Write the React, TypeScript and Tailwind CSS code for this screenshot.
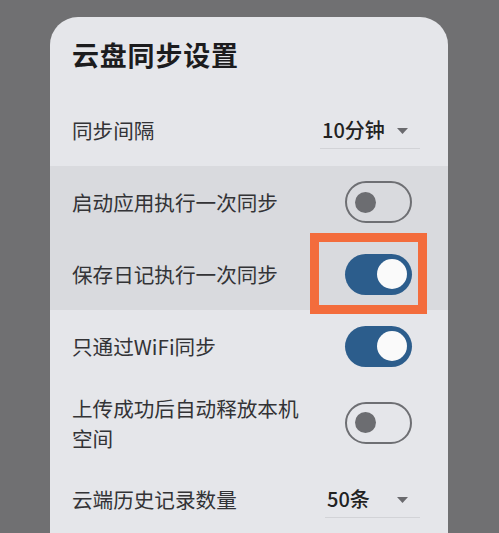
import React from "react";

const font = { fontFamily: '"Noto Sans CJK SC", "Noto Sans", sans-serif' };

function Toggle({ on }: { on: boolean }) {
  if (on) {
    return (
      <div className="w-[67px] h-[41px] rounded-full bg-[#2c5d8c] flex items-center justify-end pr-[5px] shrink-0">
        <div className="w-[30px] h-[30px] rounded-full bg-[#fafafa]" />
      </div>
    );
  }
  return (
    <div className="w-[67px] h-[42px] rounded-full border-[2.5px] border-[#6e6f73] flex items-center pl-[8px] shrink-0">
      <div className="w-[21px] h-[21px] rounded-full bg-[#6c6d71]" />
    </div>
  );
}

function Dropdown({ value, w }: { value: string; w: string }) {
  return (
    <div className={`${w} h-[38px] pt-[5px] border-b border-[#d2d3d7] flex items-start justify-between pl-[2px] pr-[12px] mr-[28px]`}>
      <span className="text-[20px] leading-[28px] font-medium text-[#222222]">{value}</span>
      <svg width="11" height="6" viewBox="0 0 11 6" className="mt-[12px]">
        <path d="M0 0 L11 0 L5.5 6 Z" fill="#6a6a6e" />
      </svg>
    </div>
  );
}

function Row({ label, children, h = "h-[72px]" }: { label: React.ReactNode; children: React.ReactNode; h?: string }) {
  return (
    <div className={`${h} flex items-center justify-between pl-[22px]`}>
      <div className="max-w-[240px] text-[20.6px] leading-[30px] text-[#333336]">{label}</div>
      {children}
    </div>
  );
}

export default function App() {
  return (
    <div className="w-[499px] h-[533px] overflow-hidden bg-[#707072] pt-[17px] pl-[50px] pr-[51px]" style={font}>
      <div className="bg-[#e5e6ea] rounded-t-[28px] pb-[60px]">
        <div className="pt-[20px] pl-[22px] pb-[21px] text-[27px] leading-[36px] font-bold text-[#1c1c1e] tracking-[0.8px]">
          云盘同步设置
        </div>
        <Row label="同步间隔">
          <Dropdown value="10分钟" w="w-[100px]" />
        </Row>
        <div className="relative bg-[#d9dade]">
          <Row label="启动应用执行一次同步">
            <div className="mr-[36px]"><Toggle on={false} /></div>
          </Row>
          <Row label="保存日记执行一次同步">
            <div className="mr-[36px]"><Toggle on={true} /></div>
          </Row>
          <div className="absolute left-[260px] top-[67px] w-[117px] h-[81px] border-[9px] border-[#f36c3c]" />
        </div>
        <Row label="只通过WiFi同步">
          <div className="mr-[36px]"><Toggle on={true} /></div>
        </Row>
        <Row label="上传成功后自动释放本机空间" h="h-[81px]">
          <div className="mr-[36px]"><Toggle on={false} /></div>
        </Row>
        <Row label="云端历史记录数量">
          <Dropdown value="50条" w="w-[95px]" />
        </Row>
      </div>
    </div>
  );
}
